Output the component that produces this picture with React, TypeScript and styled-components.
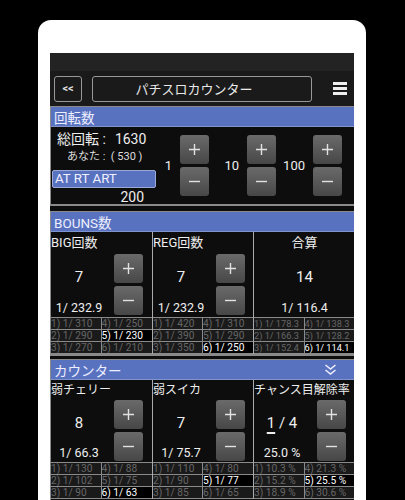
import type { ReactNode } from "react";
import styled, { createGlobalStyle } from "styled-components";

const GlobalStyle = createGlobalStyle`
  html, body {
    margin: 0;
    padding: 0;
    background: #000;
    font-family: Roboto, "Noto Sans CJK JP", sans-serif;
  }
`;

const Page = styled.div`
  width: 405px;
  height: 500px;
  overflow: hidden;
  background: #000;
  padding: 20px 39px 0 38px;
  box-sizing: border-box;
`;

const Phone = styled.div`
  height: 480px;
  background: #fff;
  border-radius: 13px 13px 0 0;
  padding: 33px 12px 0;
  box-sizing: border-box;
`;

const Screen = styled.div`
  height: 447px;
  overflow: hidden;
  background: #0d0d0d;
  color: #eee;
`;

const StatusBar = styled.div`
  height: 18px;
  background: #232323;
`;

const Header = styled.div`
  height: 35px;
  background: #1a1a1a;
  display: flex;
  align-items: center;
  padding: 0 4px;
  box-sizing: border-box;
`;

const BackButton = styled.div`
  width: 28px;
  height: 26px;
  border: 1px solid #999;
  border-radius: 3px;
  box-sizing: border-box;
  display: flex;
  align-items: center;
  justify-content: center;
  font-size: 11px;
  font-weight: 700;
  color: #ddd;
`;

const TitleBox = styled.div`
  width: 220px;
  height: 26px;
  margin-left: 10px;
  padding-right: 16px;
  border: 1px solid #999;
  border-radius: 3px;
  box-sizing: border-box;
  display: flex;
  align-items: center;
  justify-content: center;
  font-size: 13px;
  color: #e8e8e8;
`;

const Burger = styled.div`
  width: 14px;
  margin-left: 21px;
  display: flex;
  flex-direction: column;
  gap: 2px;

  span {
    height: 3px;
    background: #eee;
  }
`;

const Section = styled.section<{ $height: number }>`
  height: ${(p) => p.$height}px;
  margin-bottom: ${(p) => (p.$height === 100 ? 5 : 3)}px;
  border: 1px solid #8a8a8a;
  border-width: 1px 0 2px 1px;
  box-sizing: border-box;
  background: #0d0d0d;
`;

const SectionBar = styled.div`
  height: 20px;
  background: #5872bf;
  border-bottom: 1px solid #7f93cc;
  box-sizing: border-box;
  display: flex;
  align-items: center;
  justify-content: space-between;
  padding: 0 17px 0 3px;
  font-size: 13.5px;
  color: #eef;
`;

const SpinBody = styled.div`
  display: flex;
  height: 77px;
`;

const SpinInfo = styled.div`
  width: 105px;
  padding: 3px 0 0 1px;
  box-sizing: border-box;
`;

const TotalRow = styled.div`
  padding-left: 5px;
  font-size: 14px;
  line-height: 19px;
  white-space: nowrap;

  b {
    font-weight: 400;
    margin-left: 9px;
  }
`;

const YouRow = styled.div`
  padding-left: 15px;
  font-size: 11px;
  line-height: 16px;
  color: #ddd;
  white-space: pre;
`;

const ModeLabel = styled.div`
  height: 18px;
  margin-top: 5px;
  background: #5872bf;
  border: 1px solid #9aa9d8;
  border-radius: 2px;
  box-sizing: border-box;
  font-size: 13.3px;
  line-height: 16px;
  padding-left: 2px;
  color: #f0f0ff;
`;

const ModeValue = styled.div`
  text-align: right;
  font-size: 14px;
  line-height: 18px;
  padding-right: 12px;
`;

const SpinControls = styled.div`
  display: flex;
  padding-left: 5px;
`;

const StepGroup = styled.div`
  display: flex;
  height: 77px;
  align-items: flex-start;
  padding-top: 8px;
  box-sizing: border-box;
`;

const StepLabel = styled.div<{ $width: number }>`
  display: flex;
  align-items: center;
  justify-content: flex-end;
  width: ${(p) => p.$width}px;
  height: 61px;
  padding-right: 8px;
  box-sizing: border-box;
  font-size: 13px;
  color: #eee;
`;

const ButtonStack = styled.div`
  display: flex;
  flex-direction: column;
  gap: 3px;
  width: 29px;
`;

const StepButton = styled.div`
  width: 29px;
  height: 29px;
  border-radius: 3px;
  background: linear-gradient(#6a6a6a, #474747);
  display: flex;
  align-items: center;
  justify-content: center;
  flex-shrink: 0;
`;

const Columns = styled.div`
  display: grid;
  grid-template-columns: 102px 101px 101px;
`;

const Column = styled.div<{ $last?: boolean }>`
  border-right: ${(p) => (p.$last ? "none" : "1px solid #aaa")};
  box-sizing: border-box;
`;

const TileTop = styled.div<{ $full?: boolean; $compact?: boolean }>`
  height: ${(p) => (p.$compact ? 82 : 85)}px;
  display: grid;
  grid-template-columns: ${(p) => (p.$full ? "1fr" : "56px 29px")};
  column-gap: ${(p) => (p.$full ? 0 : 7)}px;
  grid-template-rows: ${(p) => (p.$compact ? 20 : 22)}px 1fr;
`;

const TileTitle = styled.div<{ $center?: boolean; $compact?: boolean }>`
  grid-column: 1 / -1;
  font-size: ${(p) => (p.$compact ? 12 : 13)}px;
  line-height: ${(p) => (p.$compact ? 21 : 22)}px;
  white-space: nowrap;
  text-align: ${(p) => (p.$center ? "center" : "left")};
  color: #eee;
`;

const Figures = styled.div`
  display: flex;
  flex-direction: column;
  align-items: center;
  text-align: center;
`;

const Count = styled.div`
  font-size: 15px;
  line-height: 18px;
  margin-top: 14px;
  white-space: nowrap;

  u {
    text-decoration-thickness: 2px;
    text-underline-offset: 4px;
  }
`;

const Rate = styled.div<{ $compact?: boolean }>`
  font-size: 12.5px;
  line-height: 14px;
  margin-top: ${(p) => (p.$compact ? 14 : 15)}px;
  white-space: nowrap;
`;

const MiniGrid = styled.div`
  display: grid;
  grid-template-columns: 1fr 1fr;
  border-top: 1px solid #8a8a8a;
`;

const MiniCell = styled.div<{ $on?: boolean; $narrow?: boolean }>`
  height: 12px;
  line-height: 11px;
  font-size: ${(p) => (p.$narrow ? 9.2 : 10.2)}px;
  white-space: nowrap;
  overflow: hidden;
  box-sizing: border-box;
  border-bottom: 1px solid #8a8a8a;
  border-right: 1px solid #8a8a8a;
  color: ${(p) => (p.$on ? "#fff" : "#666")};
  background: ${(p) => (p.$on ? "#000" : "#1a1a1a")};

  &:nth-child(even) {
    border-right: none;
  }
`;

type Tile = {
  title: string;
  count: ReactNode;
  rate: string;
  cells: string[];
  on: number;
  noButtons?: boolean;
};

const bonus: Tile[] = [
  {
    title: "BIG回数",
    count: "7",
    rate: "1/ 232.9",
    cells: ["1) 1/ 310", "4) 1/ 250", "2) 1/ 290", "5) 1/ 230", "3) 1/ 270", "6) 1/ 210"],
    on: 3,
  },
  {
    title: "REG回数",
    count: "7",
    rate: "1/ 232.9",
    cells: ["1) 1/ 420", "4) 1/ 310", "2) 1/ 390", "5) 1/ 290", "3) 1/ 350", "6) 1/ 250"],
    on: 5,
  },
  {
    title: "合算",
    count: "14",
    rate: "1/ 116.4",
    cells: ["1) 1/ 178.3", "4) 1/ 138.3", "2) 1/ 166.3", "5) 1/ 128.2", "3) 1/ 152.4", "6) 1/ 114.1"],
    on: 5,
    noButtons: true,
  },
];

const counters: Tile[] = [
  {
    title: "弱チェリー",
    count: "8",
    rate: "1/ 66.3",
    cells: ["1) 1/ 130", "4) 1/ 88", "2) 1/ 102", "5) 1/ 75", "3) 1/ 90", "6) 1/ 63"],
    on: 5,
  },
  {
    title: "弱スイカ",
    count: "7",
    rate: "1/ 75.7",
    cells: ["1) 1/ 110", "4) 1/ 80", "2) 1/ 90", "5) 1/ 77", "3) 1/ 85", "6) 1/ 65"],
    on: 3,
  },
  {
    title: "チャンス目解除率",
    count: (
      <>
        <u>1</u> / 4
      </>
    ),
    rate: "25.0 %",
    cells: ["1) 10.3 %", "4) 21.3 %", "2) 15.2 %", "5) 25.5 %", "3) 18.9 %", "6) 30.6 %"],
    on: 3,
  },
];

const steps = [
  { label: "1", width: 19 },
  { label: "10", width: 38 },
  { label: "100", width: 37 },
];

function Stepper() {
  return (
    <ButtonStack>
      <StepButton>
        <svg width="13" height="13" viewBox="0 0 13 13">
          <path d="M6.5 1v11M1 6.5h11" stroke="#e2e2e2" strokeWidth="1.4" />
        </svg>
      </StepButton>
      <StepButton>
        <svg width="13" height="13" viewBox="0 0 13 13">
          <path d="M1 6.5h11" stroke="#e2e2e2" strokeWidth="1.4" />
        </svg>
      </StepButton>
    </ButtonStack>
  );
}

function CounterTile({ tile, last, compact }: { tile: Tile; last: boolean; compact?: boolean }) {
  return (
    <Column $last={last}>
      <TileTop $full={tile.noButtons} $compact={compact}>
        <TileTitle $center={tile.noButtons} $compact={compact}>
          {tile.title}
        </TileTitle>
        <Figures>
          <Count>{tile.count}</Count>
          <Rate $compact={compact}>{tile.rate}</Rate>
        </Figures>
        {!tile.noButtons && <Stepper />}
      </TileTop>
      <MiniGrid>
        {tile.cells.map((cell, i) => (
          <MiniCell key={cell} $on={i === tile.on} $narrow={tile.noButtons}>
            {cell}
          </MiniCell>
        ))}
      </MiniGrid>
    </Column>
  );
}

export default function App() {
  return (
    <>
      <GlobalStyle />
      <Page>
        <Phone>
          <Screen>
            <StatusBar />
            <Header>
              <BackButton>&lt;&lt;</BackButton>
              <TitleBox>パチスロカウンター</TitleBox>
              <Burger>
                <span />
                <span />
                <span />
              </Burger>
            </Header>
            <Section $height={100}>
              <SectionBar>回転数</SectionBar>
              <SpinBody>
                <SpinInfo>
                  <TotalRow>
                    総回転 :<b>1630</b>
                  </TotalRow>
                  <YouRow>あなた :  ( 530 )</YouRow>
                  <ModeLabel>AT RT ART</ModeLabel>
                  <ModeValue>200</ModeValue>
                </SpinInfo>
                <SpinControls>
                  {steps.map((s) => (
                    <StepGroup key={s.label}>
                      <StepLabel $width={s.width}>{s.label}</StepLabel>
                      <Stepper />
                    </StepGroup>
                  ))}
                </SpinControls>
              </SpinBody>
            </Section>
            <Section $height={145}>
              <SectionBar>BOUNS数</SectionBar>
              <Columns>
                {bonus.map((t, i) => (
                  <CounterTile key={t.title} tile={t} last={i === 2} />
                ))}
              </Columns>
            </Section>
            <Section $height={145}>
              <SectionBar>
                カウンター
                <svg width="13" height="12" viewBox="0 0 13 12">
                  <path d="M1.5 1l5 4 5-4M1.5 6l5 4 5-4" fill="none" stroke="#eef" strokeWidth="1.6" />
                </svg>
              </SectionBar>
              <Columns>
                {counters.map((t, i) => (
                  <CounterTile key={t.title} tile={t} last={i === 2} compact />
                ))}
              </Columns>
            </Section>
          </Screen>
        </Phone>
      </Page>
    </>
  );
}
